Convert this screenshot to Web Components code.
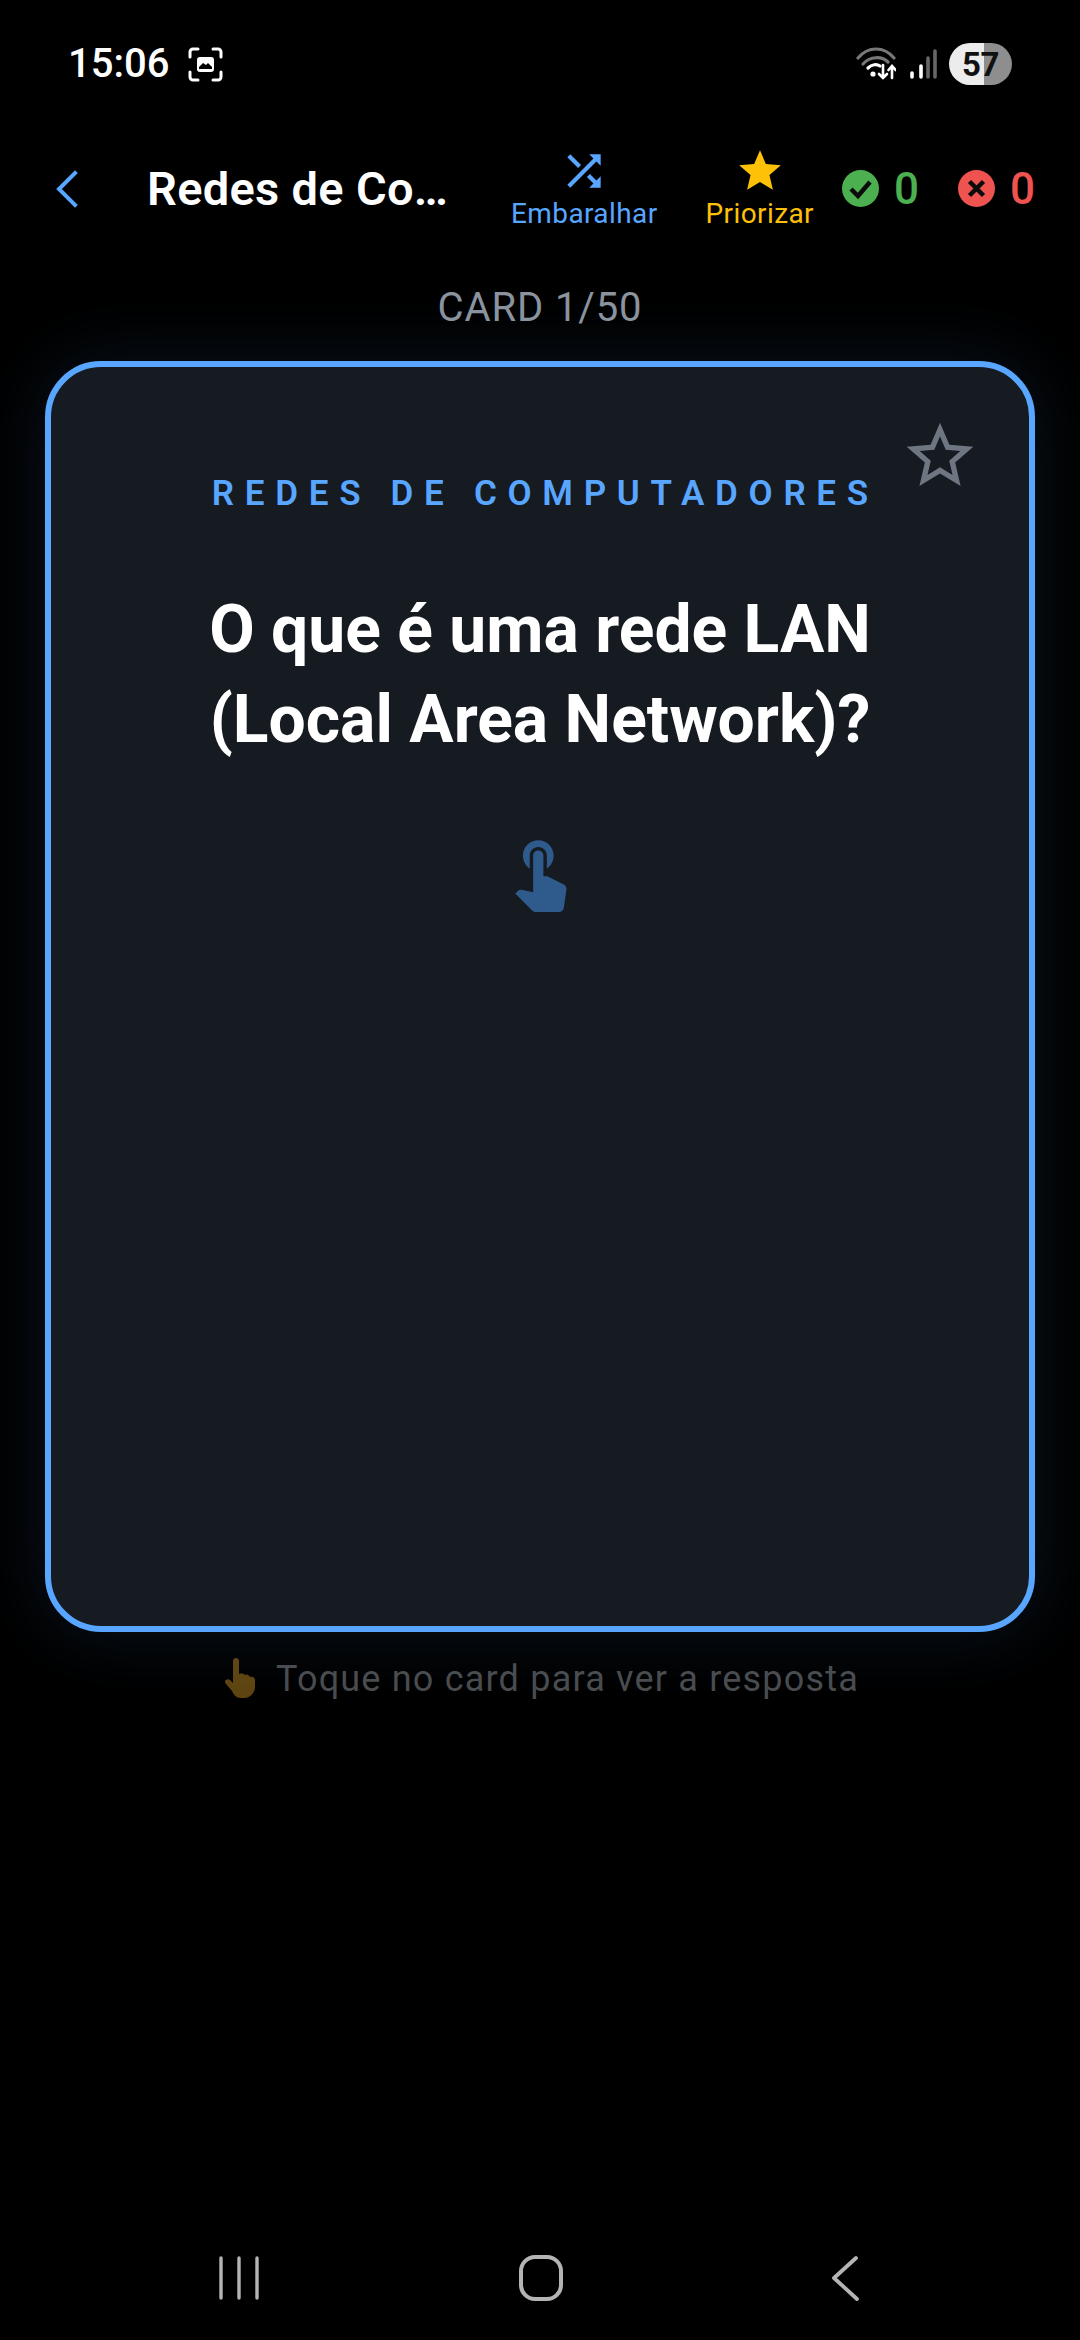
<!DOCTYPE html>
<html>
<head>
<meta charset="utf-8">
<style>
  html, body { margin: 0; padding: 0; background: #000; }
  body { font-family: Roboto, "Liberation Sans", sans-serif; }
</style>
</head>
<body>
<flash-app>
  <status-bar slot="status"></status-bar>
  <deck-header slot="header" title="Redes de Co…"></deck-header>
  <flash-card slot="card" category="REDES DE COMPUTADORES">O que é uma rede LAN (Local Area Network)?</flash-card>
  <nav-bar slot="nav"></nav-bar>
</flash-app>

<script>
(function () {
  class FlashApp extends HTMLElement {
    constructor() {
      super();
      this.attachShadow({ mode: "open" }).innerHTML = `
        <style>
          :host { display: flex; flex-direction: column; width: 1080px; height: 2340px; background: #000; overflow: hidden; }
          .count { margin-top: 52px; height: 48px; line-height: 48px; text-align: center; font-size: 40px; color: #8b949e; letter-spacing: 0.9px; }
          .hint { margin-top: 23px; height: 48px; display: flex; justify-content: center; align-items: center; gap: 19px; font-size: 36px; color: #4a4c4e; letter-spacing: 1.2px; }
          .hint svg { display: block; margin-top: -1px; }
          .space { flex: 1; }
        </style>
        <slot name="status"></slot>
        <slot name="header"></slot>
        <div class="count">CARD 1/50</div>
        <slot name="card"></slot>
        <div class="hint">
          <svg width="36" height="42" viewBox="0 0 36 42">
            <path fill="#5f4510" d="M12 3c0-4 6-4 6 0v13c3-1 5 0 6 1 2-1 4 0 5 2 3-1 5 1 5 3v7c0 6-5 11-11 11h-3c-5 0-7-3-9-7l-6-7c-3-3 1-6 4-4l3 3z"/>
          </svg>
          <span>Toque no card para ver a resposta</span>
        </div>
        <div class="space"></div>
        <slot name="nav"></slot>`;
    }
  }

  class StatusBar extends HTMLElement {
    constructor() {
      super();
      this.attachShadow({ mode: "open" }).innerHTML = `
        <style>
          :host { display: flex; align-items: center; height: 128px; padding: 0 68px; box-sizing: border-box; color: #fff; }
          .time { font-size: 40px; font-weight: 500; line-height: 48px; }
          svg { display: block; }
          .shot { margin-left: 19px; }
          .right { margin-left: auto; display: flex; align-items: center; }
          .signal { margin-left: 14px; }
          .battery { margin-left: 12px; width: 63px; height: 42px; border-radius: 21px; display: flex; align-items: center; justify-content: center;
            background: linear-gradient(90deg, #ececec 0, #ececec 35px, #8e8e8e 35px, #8e8e8e 100%);
            color: #111; font-size: 33px; font-weight: 700; letter-spacing: -0.5px; }
        </style>
        <span class="time">15:06</span>
        <svg class="shot" width="35" height="35" viewBox="0 0 35 35" fill="none" stroke="#fff" stroke-width="3" stroke-linecap="round">
          <path d="M2 10V5a3 3 0 0 1 3-3h5M25 2h5a3 3 0 0 1 3 3v5M33 25v5a3 3 0 0 1-3 3h-5M10 33H5a3 3 0 0 1-3-3v-5"/>
          <rect x="9" y="10" width="17" height="15" rx="3" fill="#fff" stroke="none"/>
          <path d="M11 20l4-4 3 2 2-2 4 4v2H11z" fill="#000" stroke="none"/>
        </svg>
        <div class="right">
          <svg width="40" height="34" viewBox="0 0 40 34" fill="none" stroke-linecap="round">
            <path d="M2 11C12 -1 28 -1 38 11" stroke="#777" stroke-width="3.2"/>
            <path d="M7 17C14 9 26 9 32 15" stroke="#777" stroke-width="3.2"/>
            <path d="M12 21c4-4 9-4 12-2" stroke="#fff" stroke-width="3.2"/>
            <circle cx="17" cy="27" r="2.6" fill="#fff"/>
            <path d="M27 18v13M23 27l4 4 4-4" stroke="#fff" stroke-width="2.6"/>
            <path d="M37 31V20M33.500 23l3.500-4 3.500 4" stroke="#fff" stroke-width="2.6" transform="translate(-1 0)"/>
          </svg>
          <svg class="signal" width="27" height="30" viewBox="0 0 27 30" stroke-linecap="round" stroke-width="3.6" fill="none">
            <path d="M2 24v4M11 17v11" stroke="#fff"/>
            <path d="M18 9v19M25 2v26" stroke="#666"/>
          </svg>
          <div class="battery">57</div>
        </div>`;
    }
  }

  class ActionButton extends HTMLElement {
    constructor() {
      super();
      this.attachShadow({ mode: "open" }).innerHTML = `
        <style>
          :host { display: flex; flex-direction: column; align-items: center; color: var(--tone, #58a6ff); }
          ::slotted(svg) { display: block; width: 50px; height: 50px; fill: currentColor; }
          .label { font-size: 28px; line-height: 36px; letter-spacing: 0.4px; white-space: nowrap; }
        </style>
        <slot name="icon"></slot>
        <span class="label"><slot></slot></span>`;
    }
  }

  class ScoreChip extends HTMLElement {
    constructor() {
      super();
      this.attachShadow({ mode: "open" }).innerHTML = `
        <style>
          :host { display: flex; align-items: center; gap: 15px; color: var(--tone, #4caf50); font-size: 44px; font-weight: 500; line-height: 48px; }
          ::slotted(svg) { display: block; width: 37px; height: 37px; }
        </style>
        <slot name="icon"></slot>
        <span><slot></slot></span>`;
    }
  }

  class DeckHeader extends HTMLElement {
    constructor() {
      super();
      const title = this.getAttribute("title");
      this.attachShadow({ mode: "open" }).innerHTML = `
        <style>
          :host { display: flex; align-items: center; padding: 17px 45px 0 55px; height: 104px; box-sizing: border-box; }
          .back { display: block; flex: none; }
          .title { margin-left: 68px; flex: 1; font-size: 47px; font-weight: 600; color: #fff; white-space: nowrap; letter-spacing: 0.3px; }
          .actions { display: flex; align-items: center; gap: 48px; }
          .scores { display: flex; align-items: center; gap: 39px; margin-left: 28px; }
        </style>
        <svg class="back" width="24" height="40" viewBox="0 0 24 40" fill="none" stroke="#58a6ff" stroke-width="4" stroke-linecap="square">
          <path d="M20 4L4 20l16 16"/>
        </svg>
        <span class="title">${title}</span>
        <div class="actions">
          <action-button>
            <svg slot="icon" viewBox="0 0 24 24"><path d="M10.59 9.17L5.41 4 4 5.41l5.17 5.17 1.42-1.41zM14.5 4l2.04 2.04L4 18.59 5.41 20 17.960 7.46 20 9.5V4h-5.5zm.33 9.41l-1.41 1.41 3.13 3.13L14.5 20H20v-5.5l-2.04 2.04-3.13-3.13z"/></svg>
            Embaralhar
          </action-button>
          <action-button style="--tone:#ffc107">
            <svg slot="icon" viewBox="0 0 24 24"><path d="M12 17.27L18.18 21l-1.64-7.03L22 9.24l-7.19-.61L12 2 9.19 8.63 2 9.24l5.46 4.73L5.82 21z"/></svg>
            Priorizar
          </action-button>
        </div>
        <div class="scores">
          <score-chip style="--tone:#4caf50">
            <svg slot="icon" viewBox="0 0 37 37"><circle cx="18.500" cy="18.500" r="18.500" fill="#4caf50"/><path d="M9 19l7 7L28 12" fill="none" stroke="#0b0b0b" stroke-width="4.500"/></svg>
            0
          </score-chip>
          <score-chip style="--tone:#ef5350">
            <svg slot="icon" viewBox="0 0 37 37"><circle cx="18.500" cy="18.500" r="18.500" fill="#ef5350"/><path d="M11.500 11.500l14 14M25.500 11.500l-14 14" fill="none" stroke="#0b0b0b" stroke-width="4.500"/></svg>
            0
          </score-chip>
        </div>`;
    }
  }

  class FlashCard extends HTMLElement {
    constructor() {
      super();
      const category = this.getAttribute("category");
      this.attachShadow({ mode: "open" }).innerHTML = `
        <style>
          :host { display: flex; flex-direction: column; align-items: center; position: relative; box-sizing: border-box;
            width: 990px; height: 1271px; margin: 29px 45px 0; padding-top: 107px;
            background: #161b22; border: 6px solid #58a6ff; border-radius: 56px;
            box-shadow: 0 0 70px rgba(88, 166, 255, 0.13); }
          .star { position: absolute; top: 49px; right: 49px; width: 80px; height: 80px; fill: #6e7681; }
          .category { font-size: 35px; font-weight: 600; line-height: 40px; color: #58a6ff; letter-spacing: 10.7px; margin-right: -10.7px; white-space: nowrap; }
          .question { margin-top: 71px; width: 800px; text-align: center; font-size: 66px; font-weight: 700; line-height: 90px; color: #fff; }
          .tap { display: block; margin-top: 65px; width: 82px; height: 82px; fill: #2f5a8c; }
        </style>
        <svg class="star" viewBox="0 0 24 24"><path d="M22 9.24l-7.19-.62L12 2 9.19 8.63 2 9.24l5.46 4.73L5.82 21 12 17.27 18.18 21l-1.63-7.03L22 9.24zM12 15.4l-3.76 2.27 1-4.28-3.32-2.88 4.38-.38L12 6.1l1.71 4.04 4.38.38-3.32 2.88 1 4.28L12 15.4z"/></svg>
        <div class="category">${category}</div>
        <div class="question"><slot></slot></div>
        <svg class="tap" viewBox="0 0 24 24"><path d="M9 11.24V7.5C9 6.12 10.12 5 11.5 5S14 6.12 14 7.5v3.74c1.21-.81 2-2.18 2-3.74C16 5.01 13.99 3 11.5 3S7 5.01 7 7.5c0 1.56.79 2.93 2 3.74zm9.84 4.63l-4.54-2.26c-.17-.07-.35-.11-.54-.11H13v-6c0-.83-.67-1.5-1.5-1.5S10 6.67 10 7.5v10.74l-3.43-.72c-.08-.01-.15-.03-.24-.03-.31 0-.59.13-.79.33l-.79.8 4.94 4.94c.27.27.65.44 1.06.44h6.79c.75 0 1.33-.55 1.44-1.28l.75-5.27c.01-.07.02-.14.02-.2 0-.62-.38-1.16-.91-1.38z"/></svg>`;
    }
  }

  class NavBar extends HTMLElement {
    constructor() {
      super();
      this.attachShadow({ mode: "open" }).innerHTML = `
        <style>
          :host { display: flex; align-items: center; height: 86px; margin-bottom: 19px; padding-left: 218px; box-sizing: border-box; }
          svg { display: block; }
          .home { margin-left: 258px; }
          .back { margin-left: 266px; }
        </style>
        <svg width="42" height="46" viewBox="0 0 42 46" fill="none" stroke="#b4b4b4" stroke-width="3.400" stroke-linecap="round">
          <path d="M3 3v40M21 3v40M39 3v40"/>
        </svg>
        <svg class="home" width="46" height="48" viewBox="0 0 46 48" fill="none" stroke="#b4b4b4" stroke-width="4">
          <rect x="3" y="3" width="40" height="42" rx="14"/>
        </svg>
        <svg class="back" width="30" height="46" viewBox="0 0 30 46" fill="none" stroke="#b4b4b4" stroke-width="3.800" stroke-linecap="round" stroke-linejoin="round">
          <path d="M26 3L4 23l23 21"/>
        </svg>`;
    }
  }

  customElements.define("flash-app", FlashApp);
  customElements.define("status-bar", StatusBar);
  customElements.define("action-button", ActionButton);
  customElements.define("score-chip", ScoreChip);
  customElements.define("deck-header", DeckHeader);
  customElements.define("flash-card", FlashCard);
  customElements.define("nav-bar", NavBar);
})();
</script>
</body>
</html>
